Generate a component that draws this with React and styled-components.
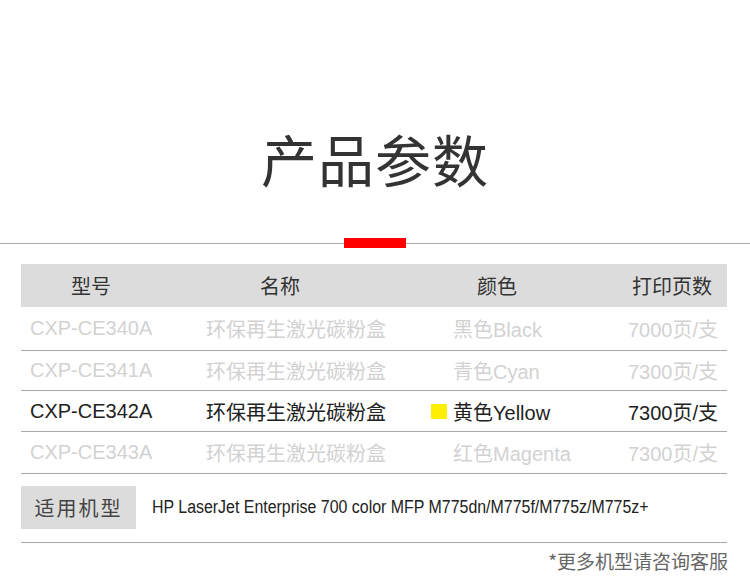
import React from 'react';
import styled, { createGlobalStyle } from 'styled-components';

const GlobalStyle = createGlobalStyle`
  html, body {
    margin: 0;
    padding: 0;
    background: #fff;
  }
  body {
    font-family: "Liberation Sans", "Noto Sans CJK SC", sans-serif;
  }
`;

const Page = styled.div`
  width: 750px;
  min-height: 585px;
  padding-top: 130px;
  box-sizing: border-box;
  background: #fff;
  overflow: hidden;
`;

const Title = styled.h1`
  margin: 0;
  text-align: center;
  font-family: "Noto Sans CJK SC", sans-serif;
  font-weight: 400;
  font-size: 56px;
  line-height: 56px;
  letter-spacing: 1px;
  color: #333;
`;

const Divider = styled.div`
  display: flex;
  align-items: center;
  height: 10px;
  margin-top: 52px;

  &::before,
  &::after {
    content: "";
    flex: 1;
    height: 1px;
    background: #a8a8a8;
  }
`;

const RedBar = styled.span`
  width: 62px;
  height: 10px;
  background: #ff0000;
`;

const Table = styled.div`
  margin: 16px 23px 0 21px;
`;

const HeadRow = styled.div`
  display: grid;
  grid-template-columns: 140px 238px 196px 1fr;
  align-items: center;
  height: 43px;
  background: #dcdcdc;
  color: #333;
  font-family: "Noto Sans CJK SC", sans-serif;
  font-size: 20px;
`;

const HeadCell = styled.div`
  text-align: ${(p) => (p.$right ? 'right' : 'center')};
  padding-right: ${(p) => (p.$right ? '15px' : '0')};
`;

const Row = styled.div`
  display: grid;
  grid-template-columns: 176px 225px 1fr auto;
  align-items: center;
  box-sizing: border-box;
  height: ${(p) => p.$h || 41}px;
  border-bottom: 1px solid #a8a8a8;
  color: ${(p) => (p.$active ? '#222' : '#d2d2d2')};
  font-size: 20px;
`;

const Cell = styled.div`
  display: flex;
  align-items: center;
  padding: 0 ${(p) => (p.$right ? '9px' : '0')} 0 ${(p) => (p.$right ? '0' : '9px')};
  white-space: nowrap;
`;

const Swatch = styled.span`
  width: 16px;
  height: 15px;
  margin-right: 6px;
  background: ${(p) => p.$color || 'transparent'};
`;

const FitRow = styled.div`
  display: flex;
  align-items: center;
  gap: 16px;
  padding: 12px 0 13px;
  border-bottom: 1px solid #a8a8a8;
`;

const FitLabel = styled.div`
  width: 115px;
  height: 43px;
  display: flex;
  align-items: center;
  justify-content: center;
  background: #dcdcdc;
  color: #444;
  font-family: "Noto Sans CJK SC", sans-serif;
  font-size: 20px;
  letter-spacing: 2px;
`;

const FitModels = styled.div`
  font-family: "Liberation Sans", Arial, sans-serif;
  font-size: 18px;
  color: #222;
  white-space: nowrap;
  transform: scaleX(0.885);
  transform-origin: left center;
`;

const Note = styled.p`
  margin: 0;
  padding: 8px 22px 0 0;
  text-align: right;
  font-family: "Noto Sans CJK SC", sans-serif;
  font-size: 19px;
  line-height: 20px;
  color: #666;
`;

const rows = [
  { model: 'CXP-CE340A', color: '黑色Black', pages: '7000页/支', h: 44 },
  { model: 'CXP-CE341A', color: '青色Cyan', pages: '7300页/支', h: 40 },
  { model: 'CXP-CE342A', color: '黄色Yellow', pages: '7300页/支', h: 41, swatch: '#ffee00', active: true },
  { model: 'CXP-CE343A', color: '红色Magenta', pages: '7300页/支', h: 42 },
];

export default function App() {
  return (
    <Page>
      <GlobalStyle />
      <Title>产品参数</Title>
      <Divider>
        <RedBar />
      </Divider>
      <Table>
        <HeadRow>
          <HeadCell>型号</HeadCell>
          <HeadCell>名称</HeadCell>
          <HeadCell>颜色</HeadCell>
          <HeadCell $right>打印页数</HeadCell>
        </HeadRow>
        {rows.map((r) => (
          <Row key={r.model} $active={r.active} $h={r.h}>
            <Cell>{r.model}</Cell>
            <Cell>环保再生激光碳粉盒</Cell>
            <Cell>
              <Swatch $color={r.swatch} />
              {r.color}
            </Cell>
            <Cell $right>{r.pages}</Cell>
          </Row>
        ))}
        <FitRow>
          <FitLabel>适用机型</FitLabel>
          <FitModels>HP LaserJet Enterprise 700 color MFP M775dn/M775f/M775z/M775z+</FitModels>
        </FitRow>
      </Table>
      <Note>*更多机型请咨询客服</Note>
    </Page>
  );
}
